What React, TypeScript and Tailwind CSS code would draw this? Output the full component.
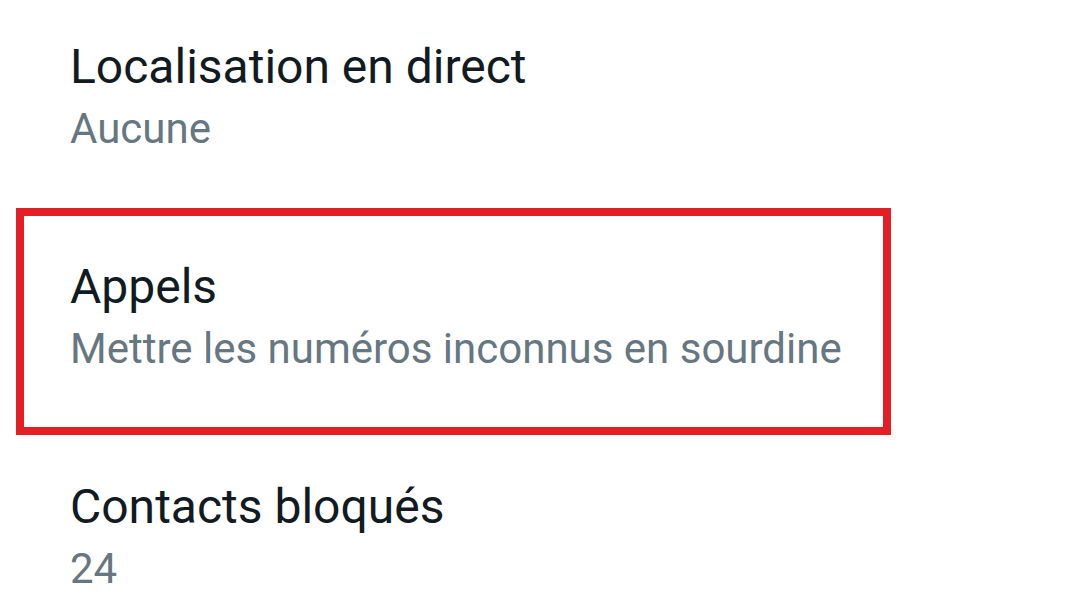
import React from "react";

type Setting = {
  title: string;
  subtitle: string;
  highlighted?: boolean;
};

const settings: Setting[] = [
  { title: "Localisation en direct", subtitle: "Aucune" },
  {
    title: "Appels",
    subtitle: "Mettre les numéros inconnus en sourdine",
    highlighted: true,
  },
  { title: "Contacts bloqués", subtitle: "24" },
];

const SettingRow = ({ title, subtitle, highlighted }: Setting) => (
  <div className="relative h-[220px] pl-[70px] pt-[37px]">
    {/* Annotation box */}
    {highlighted && (
      <div className="absolute left-[16px] top-[-12px] w-[875px] h-[227px] border-[8px] border-[#e31e25] pointer-events-none"></div>
    )}
    <div className="text-[48px] leading-[60px] text-[#111b21]">{title}</div>
    <div className="mt-[6px] text-[42px] leading-[52px] text-[#667781]">
      {subtitle}
    </div>
  </div>
);

const App = () => {
  return (
    <div
      className="w-[1080px] h-[608px] bg-white overflow-hidden"
      style={{ fontFamily: "Roboto, 'Noto Sans', sans-serif" }}
    >
      {settings.map((item) => (
        <SettingRow key={item.title} {...item} />
      ))}
    </div>
  );
};

export default App;
